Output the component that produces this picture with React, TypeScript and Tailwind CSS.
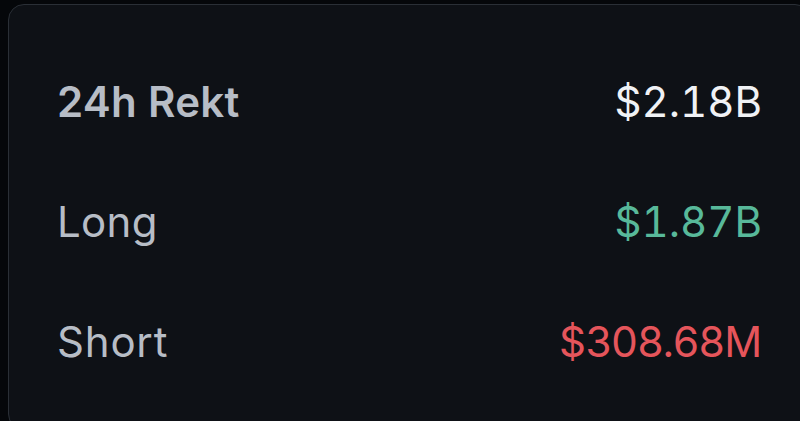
export default function App() {
  const rows = [
    { label: "24h Rekt", value: "$2.18B", labelCls: "font-semibold text-[#b7bdc6] tracking-[0.3px]", valueCls: "text-[#f0f2f5] tabular-nums" },
    { label: "Long", value: "$1.87B", labelCls: "font-normal text-[#b7bdc6] tracking-[0.3px]", valueCls: "text-[#58b99a] tabular-nums" },
    { label: "Short", value: "$308.68M", labelCls: "font-normal text-[#b7bdc6] tracking-[0.8px]", valueCls: "text-[#e5555b] tracking-[-0.3px]" },
  ];
  return (
    <div className="w-[800px] h-[421px] overflow-hidden bg-[#05070a] pl-[8px] pt-[4px]">
      <div className="w-[803px] h-[426px] rounded-[16px] border-[1.5px] border-[#2a2f36] bg-[#0e1116] px-[48px] pt-[37px] flex flex-col" style={{ fontFamily: "Inter, 'Noto Sans', sans-serif" }}>
        {rows.map((r) => (
          <div key={r.label} className="h-[120px] flex items-center justify-between text-[42px] leading-none">
            <span className={r.labelCls}>{r.label}</span>
            <span className={r.valueCls}>{r.value}</span>
          </div>
        ))}
      </div>
    </div>
  );
}
